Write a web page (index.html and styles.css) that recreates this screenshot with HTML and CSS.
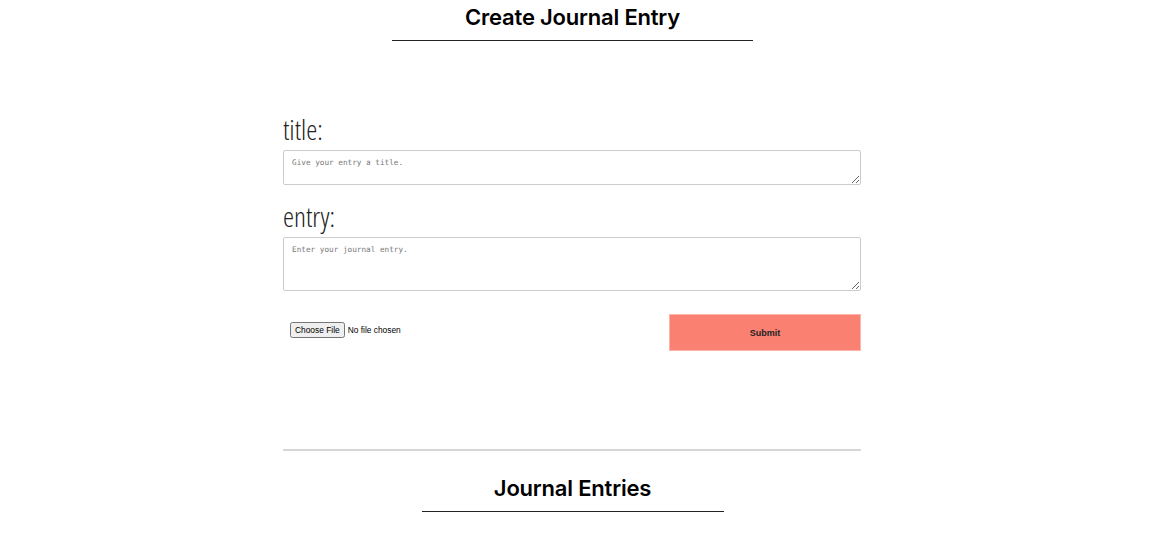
FILE: index.html
```html
<!DOCTYPE html>
<html>
<head>
<meta charset="utf-8">
<link rel="stylesheet" href="styles.css">
</head>
<body>
<div class="page">
  <h1 class="section-title title-create">Create Journal Entry</h1>
  <form class="entry-form">
    <label class="field-label" for="title">title:</label>
    <textarea id="title" class="field field-title" placeholder="Give your entry a title."></textarea>
    <label class="field-label" for="entry">entry:</label>
    <textarea id="entry" class="field field-entry" placeholder="Enter your journal entry."></textarea>
    <div class="form-actions">
      <input type="file" class="file-input">
      <button type="button" class="submit-btn">Submit</button>
    </div>
  </form>
  <hr class="divider">
  <h2 class="section-title title-entries">Journal Entries</h2>
</div>
</body>
</html>
```
FILE: styles.css
```css
html, body {
  margin: 0;
  padding: 0;
  background: #fff;
}
body {
  font-family: Inter, "Liberation Sans", sans-serif;
  color: #000;
}
.page {
  width: 1145px;
  display: flex;
  flex-direction: column;
  align-items: center;
}
.section-title {
  margin: 0 auto;
  font-size: 22px;
  font-weight: 600;
  text-align: center;
  border-bottom: 1.5px solid #222;
  line-height: 26px;
  letter-spacing: -0.2px;
}
.title-create {
  width: 361px;
  padding-top: 4px;
  padding-bottom: 10px;
}
.title-entries {
  width: 302px;
  margin-top: 24px;
  padding-bottom: 10px;
}
.entry-form {
  width: 578px;
  margin-top: 72px;
  margin-right: 1px;
  display: flex;
  flex-direction: column;
}
.field-label {
  font-family: "Open Sans", sans-serif;
  font-weight: 300;
  font-stretch: 75%;
  font-size: 28px;
  line-height: 32px;
  padding-bottom: 5px;
  color: #222;
}
.field {
  box-sizing: border-box;
  width: 100%;
  border: 1px solid #ccc;
  border-radius: 2px;
  font-family: "DejaVu Sans Mono", monospace;
  font-size: 7.7px;
  padding: 7px 8px;
  resize: vertical;
  margin: 0;
}
.field::placeholder {
  color: #777;
}
.field-title {
  height: 35px;
  margin-bottom: 15px;
}
.field-entry {
  height: 54px;
}
.form-actions {
  margin-top: 23px;
  display: flex;
  justify-content: space-between;
  align-items: center;
  padding-left: 7px;
}
.file-input {
  font-size: 8.4px;
  font-family: "Liberation Sans", sans-serif;
  margin-bottom: 6px;
}
.file-input::file-selector-button {
  padding: 1px 3px;
  margin-right: 3px;
}
.submit-btn {
  width: 192px;
  height: 37px;
  background: #fa8072;
  border: 1px solid #fdb4aa;
  font-family: "Liberation Sans", sans-serif;
  font-weight: 700;
  font-size: 9px;
  color: #222;
  padding: 0;
}
.divider {
  width: 578px;
  margin: 98px 1px 0 0;
  border: 0;
  border-top: 2px solid #d6d6d6;
}
```
